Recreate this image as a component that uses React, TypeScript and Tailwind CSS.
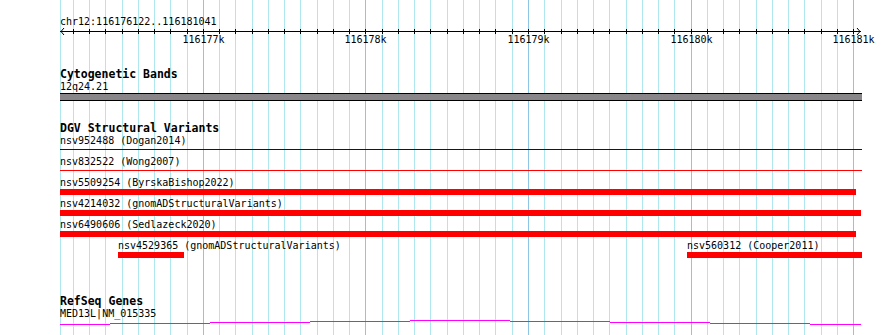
import React from 'react';

const VIEW_START = 116176122;
const VIEW_END = 116181041;
const PX_PER_BP = 0.1626;
const ORIGIN = 60.54;
const LEFT = 60;

const toPx = (bp: number) => ORIGIN + (bp - VIEW_START) * PX_PER_BP;

// every 100bp from 116176200 to 116181000
const gridBps = Array.from({ length: 49 }, (_, i) => 116176200 + i * 100);

interface Feature {
  label: string;
  x1: number; // page px
  x2: number;
  kind: 'bar' | 'line';
  color: string;
}

const dgvRows: Feature[][] = [
  [{ label: 'nsv952488 (Dogan2014)', x1: 60, x2: 862, kind: 'line', color: '#0000c8' }],
  [{ label: 'nsv832522 (Wong2007)', x1: 60, x2: 862, kind: 'line', color: '#ff0000' }],
  [{ label: 'nsv5509254 (ByrskaBishop2022)', x1: 60, x2: 856, kind: 'bar', color: '#ff0000' }],
  [{ label: 'nsv4214032 (gnomADStructuralVariants)', x1: 60, x2: 861, kind: 'bar', color: '#ff0000' }],
  [{ label: 'nsv6490606 (Sedlazeck2020)', x1: 60, x2: 856, kind: 'bar', color: '#ff0000' }],
  [
    { label: 'nsv4529365 (gnomADStructuralVariants)', x1: 118, x2: 184, kind: 'bar', color: '#ff0000' },
    { label: 'nsv560312 (Cooper2011)', x1: 687, x2: 862, kind: 'bar', color: '#ff0000' },
  ],
];

// transcript drawn as stepped segments (x from, x to, y offset)
const geneSegments: [number, number, number][] = [
  [60, 110, 5],
  [110, 210, 4],
  [210, 310, 3],
  [310, 410, 2],
  [410, 510, 1],
  [510, 610, 2],
  [610, 710, 3],
  [710, 810, 4],
  [810, 861, 5],
];

function Grid() {
  return (
    <svg className="absolute inset-0 pointer-events-none" width={890} height={335} shapeRendering="crispEdges">
      <rect x={60} y={0} width={1} height={335} fill="#aee8ee" />
      {gridBps.map((bp) => {
        const major = bp % 1000 === 0;
        return (
          <rect
            key={bp}
            x={Math.floor(toPx(bp))}
            y={0}
            width={1}
            height={335}
            fill={major ? '#8cc6e4' : '#aee8ee'}
          />
        );
      })}
    </svg>
  );
}

function Ruler() {
  const right = Math.floor(toPx(VIEW_END));
  return (
    <div className="relative h-[67px]">
      <div className="pt-[17px] pl-[60px] leading-[10px] whitespace-nowrap">chr12:116176122..116181041</div>
      <svg className="absolute left-0 top-0" width={890} height={40} shapeRendering="crispEdges">
        <rect x={LEFT} y={31} width={right - LEFT + 1} height={1} fill="#000" />
        {gridBps.map((bp) => (
          <rect key={bp} x={Math.floor(toPx(bp))} y={29} width={1} height={5} fill="#000" />
        ))}
        <path d={`M${LEFT + 4} 28 L${LEFT + 1} 31.5 L${LEFT + 4} 35`} stroke="#000" fill="none" shapeRendering="auto" />
        <path d={`M${right - 3} 28 L${right} 31.5 L${right - 3} 35`} stroke="#000" fill="none" shapeRendering="auto" />
      </svg>
      {gridBps
        .filter((bp) => bp % 1000 === 0)
        .map((bp) => (
          <div
            key={bp}
            className="absolute top-[34px] w-[60px] -ml-[30px] text-center leading-[12px]"
            style={{ left: Math.floor(toPx(bp)) + 0.5 }}
          >
            {bp / 1000}k
          </div>
        ))}
    </div>
  );
}

function TrackTitle({ children }: { children: React.ReactNode }) {
  return (
    <div className="pl-[60px] pt-[2px] font-bold text-[11.5px] leading-[11px] whitespace-nowrap">{children}</div>
  );
}

function TrackLabel({ children }: { children: React.ReactNode }) {
  return <div className="pl-[60px] pt-[2px] leading-[10px] whitespace-nowrap">{children}</div>;
}

function FeatureRow({ features }: { features: Feature[] }) {
  return (
    <div className="relative h-[21px]">
      {features.map((f) => (
        <div key={f.label} className="absolute top-0 flex flex-col" style={{ left: f.x1 }}>
          <div className="pt-[2px] leading-[10px] whitespace-nowrap">{f.label}</div>
          {f.kind === 'bar' ? (
            <div className="mt-[1px] h-[6px]" style={{ width: f.x2 - f.x1, background: f.color }} />
          ) : (
            <div className="mt-[3px] h-[1px]" style={{ width: f.x2 - f.x1, background: f.color }} />
          )}
        </div>
      ))}
    </div>
  );
}

export default function App() {
  return (
    <div className="relative w-[890px] h-[335px] overflow-hidden bg-white text-black text-[10px] font-['DejaVu_Sans_Mono',monospace]">
      <Grid />
      <div className="relative z-10 flex flex-col">
        <Ruler />

        {/* cytogenetic bands */}
        <section className="flex flex-col">
          <TrackTitle>Cytogenetic Bands</TrackTitle>
          <TrackLabel>12q24.21</TrackLabel>
          <div className="ml-[60px] mt-[1px] h-[8px] w-[802px] border-y border-black bg-[#888688]" />
        </section>

        {/* DGV */}
        <section className="mt-[20px] flex flex-col">
          <TrackTitle>DGV Structural Variants</TrackTitle>
          {dgvRows.map((row, i) => (
            <FeatureRow key={i} features={row} />
          ))}
        </section>

        {/* RefSeq */}
        <section className="mt-[34px] flex flex-col">
          <TrackTitle>RefSeq Genes</TrackTitle>
          <TrackLabel>MED13L|NM_015335</TrackLabel>
          <svg width={890} height={6} shapeRendering="crispEdges" className="block">
            {geneSegments.map(([a, b, y]) => (
              <rect key={a} x={a} y={y} width={b - a} height={1} fill="#ff00ff" />
            ))}
          </svg>
        </section>
      </div>
    </div>
  );
}
